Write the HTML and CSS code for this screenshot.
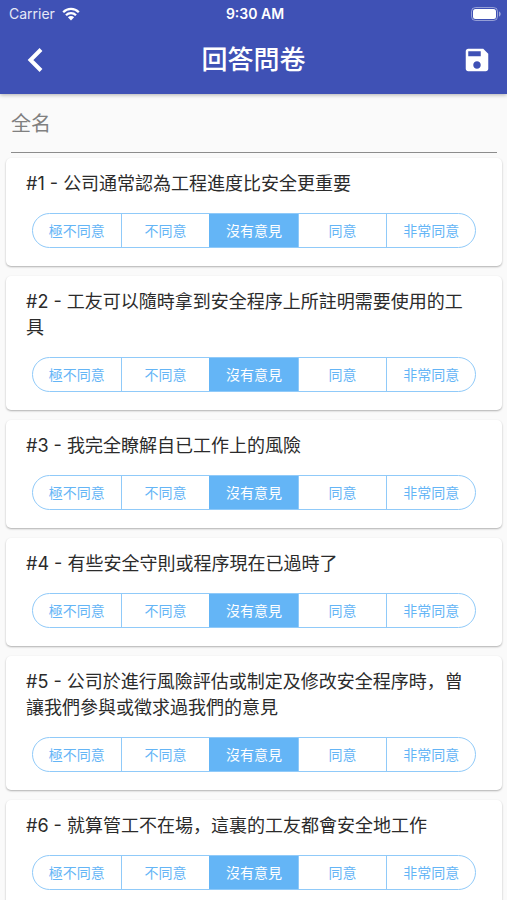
FILE: index.html
```
<!DOCTYPE html>
<html lang="zh">
<head>
    <meta charset="UTF-8">
    <meta name="viewport" content="width=device-width, initial-scale=1">
    <title>回答問卷</title>
    <link rel="stylesheet" href="styles.css">
</head>
<body>
    <header class="header">
        <!-- Status bar -->
        <div class="status">
            <div class="status-left">
                <span>Carrier</span>
                <svg class="wifi" viewBox="0 0 18 14" aria-hidden="true">
                    <path d="M1.2 5.2a11 11 0 0 1 15.6 0M4 8.2a7 7 0 0 1 10 0" fill="none" stroke="#fff" stroke-width="2.3"/>
                    <path d="M9 13.4L5.9 10.3a4.4 4.4 0 0 1 6.2 0z" fill="#fff"/>
                </svg>
            </div>
            <span class="clock">9:30 AM</span>
            <div class="status-right">
                <svg class="battery" viewBox="0 0 30 14" aria-hidden="true">
                    <rect x="0.5" y="0.5" width="26" height="13" rx="4" fill="none" stroke="#fff" stroke-opacity="0.45"/>
                    <rect x="2" y="2" width="23" height="10" rx="2.5" fill="#fff"/>
                    <path d="M28 4.5v5c1-.3 1.7-1.3 1.7-2.5s-.7-2.2-1.7-2.5z" fill="#fff" fill-opacity="0.5"/>
                </svg>
            </div>
        </div>

        <!-- App bar -->
        <div class="appbar">
            <button class="icon-btn" type="button" aria-label="返回">
                <svg width="34" height="28" viewBox="0 0 34 28" aria-hidden="true">
                    <path d="M28 3.500L17.500 14L28 24.500" fill="none" stroke="#fff" stroke-width="4"/>
                </svg>
            </button>
            <h1 class="title">回答問卷</h1>
            <button class="icon-btn" type="submit" form="survey" aria-label="儲存">
                <svg width="30" height="30" viewBox="0 0 24 24" aria-hidden="true">
                    <path d="M17 3H5c-1.110 0-2 .9-2 2v14c0 1.100.89 2 2 2h14c1.100 0 2-.9 2-2V7l-4-4zm-5 16c-1.660 0-3-1.340-3-3s1.340-3 3-3 3 1.340 3 3-1.340 3-3 3zm3-10H5V5h10v4z" fill="#fff"/>
                </svg>
            </button>
        </div>
    </header>

    <main class="content">
        <form id="survey">
            <div class="name-field">
                <input class="name-input" type="text" name="name" placeholder="全名" aria-label="全名">
            </div>

            <section class="card">
                <h2 class="question" id="t1">#1 - 公司通常認為工程進度比安全更重要</h2>
                <div class="segments" role="radiogroup" aria-labelledby="t1">
                    <label class="segment"><input type="radio" name="q1" value="1">極不同意</label>
                    <label class="segment"><input type="radio" name="q1" value="2">不同意</label>
                    <label class="segment"><input type="radio" name="q1" value="3" checked>沒有意見</label>
                    <label class="segment"><input type="radio" name="q1" value="4">同意</label>
                    <label class="segment"><input type="radio" name="q1" value="5">非常同意</label>
                </div>
            </section>

            <section class="card">
                <h2 class="question" id="t2">#2 - 工友可以隨時拿到安全程序上所註明需要使用的工具</h2>
                <div class="segments" role="radiogroup" aria-labelledby="t2">
                    <label class="segment"><input type="radio" name="q2" value="1">極不同意</label>
                    <label class="segment"><input type="radio" name="q2" value="2">不同意</label>
                    <label class="segment"><input type="radio" name="q2" value="3" checked>沒有意見</label>
                    <label class="segment"><input type="radio" name="q2" value="4">同意</label>
                    <label class="segment"><input type="radio" name="q2" value="5">非常同意</label>
                </div>
            </section>

            <section class="card">
                <h2 class="question" id="t3">#3 - 我完全瞭解自已工作上的風險</h2>
                <div class="segments" role="radiogroup" aria-labelledby="t3">
                    <label class="segment"><input type="radio" name="q3" value="1">極不同意</label>
                    <label class="segment"><input type="radio" name="q3" value="2">不同意</label>
                    <label class="segment"><input type="radio" name="q3" value="3" checked>沒有意見</label>
                    <label class="segment"><input type="radio" name="q3" value="4">同意</label>
                    <label class="segment"><input type="radio" name="q3" value="5">非常同意</label>
                </div>
            </section>

            <section class="card">
                <h2 class="question" id="t4">#4 - 有些安全守則或程序現在已過時了</h2>
                <div class="segments" role="radiogroup" aria-labelledby="t4">
                    <label class="segment"><input type="radio" name="q4" value="1">極不同意</label>
                    <label class="segment"><input type="radio" name="q4" value="2">不同意</label>
                    <label class="segment"><input type="radio" name="q4" value="3" checked>沒有意見</label>
                    <label class="segment"><input type="radio" name="q4" value="4">同意</label>
                    <label class="segment"><input type="radio" name="q4" value="5">非常同意</label>
                </div>
            </section>

            <section class="card">
                <h2 class="question" id="t5">#5 - 公司於進行風險評估或制定及修改安全程序時，曾讓我們參與或徵求過我們的意見</h2>
                <div class="segments" role="radiogroup" aria-labelledby="t5">
                    <label class="segment"><input type="radio" name="q5" value="1">極不同意</label>
                    <label class="segment"><input type="radio" name="q5" value="2">不同意</label>
                    <label class="segment"><input type="radio" name="q5" value="3" checked>沒有意見</label>
                    <label class="segment"><input type="radio" name="q5" value="4">同意</label>
                    <label class="segment"><input type="radio" name="q5" value="5">非常同意</label>
                </div>
            </section>

            <section class="card">
                <h2 class="question" id="t6">#6 - 就算管工不在場，這裏的工友都會安全地工作</h2>
                <div class="segments" role="radiogroup" aria-labelledby="t6">
                    <label class="segment"><input type="radio" name="q6" value="1">極不同意</label>
                    <label class="segment"><input type="radio" name="q6" value="2">不同意</label>
                    <label class="segment"><input type="radio" name="q6" value="3" checked>沒有意見</label>
                    <label class="segment"><input type="radio" name="q6" value="4">同意</label>
                    <label class="segment"><input type="radio" name="q6" value="5">非常同意</label>
                </div>
            </section>
        </form>
    </main>
</body>
</html>
```
FILE: styles.css
```
* {
    box-sizing: border-box;
}

body {
    margin: 0;
    height: 100vh;
    display: flex;
    flex-direction: column;
    background-color: #fafafa;
    color: #2b2b2b;
    font-family: Inter, "Noto Sans CJK SC", sans-serif;
}

/* Header */
.header {
    position: relative;
    z-index: 1;
    flex-shrink: 0;
    background-color: #3f51b5;
    color: #fff;
    box-shadow: 0 1px 4px rgba(0, 0, 0, 0.3);
}

.status {
    display: grid;
    grid-template-columns: 1fr auto 1fr;
    align-items: center;
    height: 27px;
    padding: 0 6px 0 9px;
    font-size: 14px;
}

.status-left {
    display: flex;
    align-items: center;
    gap: 7px;
    color: #e6e8f6;
}

.status-right {
    display: flex;
    justify-content: flex-end;
}

.clock {
    font-weight: 600;
}

.wifi {
    width: 18px;
    height: 14px;
}

.battery {
    width: 30px;
    height: 14px;
}

.appbar {
    display: flex;
    align-items: center;
    justify-content: space-between;
    height: 67px;
    padding: 0 6px 1px;
}

.icon-btn {
    display: flex;
    align-items: center;
    justify-content: center;
    width: 48px;
    height: 48px;
    padding: 0;
    border: none;
    background: none;
    cursor: pointer;
}

.title {
    margin: 0;
    font-size: 26px;
    line-height: 36px;
    font-weight: 500;
}

/* Content */
.content {
    flex: 1;
    min-height: 0;
    overflow-y: auto;
    scrollbar-width: none;
}

.name-field {
    padding: 0 10px 5px 11px;
}

.name-input {
    display: block;
    width: 100%;
    height: 59px;
    padding: 2px 0 0;
    border: none;
    border-bottom: 1px solid #8c8c8c;
    border-radius: 0;
    background: none;
    outline: none;
    color: #2b2b2b;
    font-family: inherit;
    font-size: 20px;
}

.name-input::placeholder {
    color: #808080;
    opacity: 1;
}

/* Question cards */
.card {
    margin: 0 5px 10px 6px;
    padding: 13px 20px 18px;
    border-radius: 5px;
    background-color: #fff;
    box-shadow: 0 1px 2px rgba(0, 0, 0, 0.3);
}

.question {
    margin: 0 0 16px;
    padding-right: 6px;
    font-size: 18px;
    line-height: 26px;
    font-weight: 400;
}

.segments {
    display: flex;
    height: 35px;
    margin: 0 6px;
    overflow: hidden;
    border: 1px solid #90caf9;
    border-radius: 18px;
}

.segment {
    display: flex;
    flex: 1;
    align-items: center;
    justify-content: center;
    padding-bottom: 2px;
    color: #64b5f6;
    font-size: 14px;
    cursor: pointer;
}

.segment + .segment {
    border-left: 1px solid #90caf9;
}

.segment input {
    appearance: none;
    width: 0;
    height: 0;
    margin: 0;
}

.segment:has(input:checked) {
    border-color: #64b5f6;
    background-color: #64b5f6;
    color: #fff;
}
```
